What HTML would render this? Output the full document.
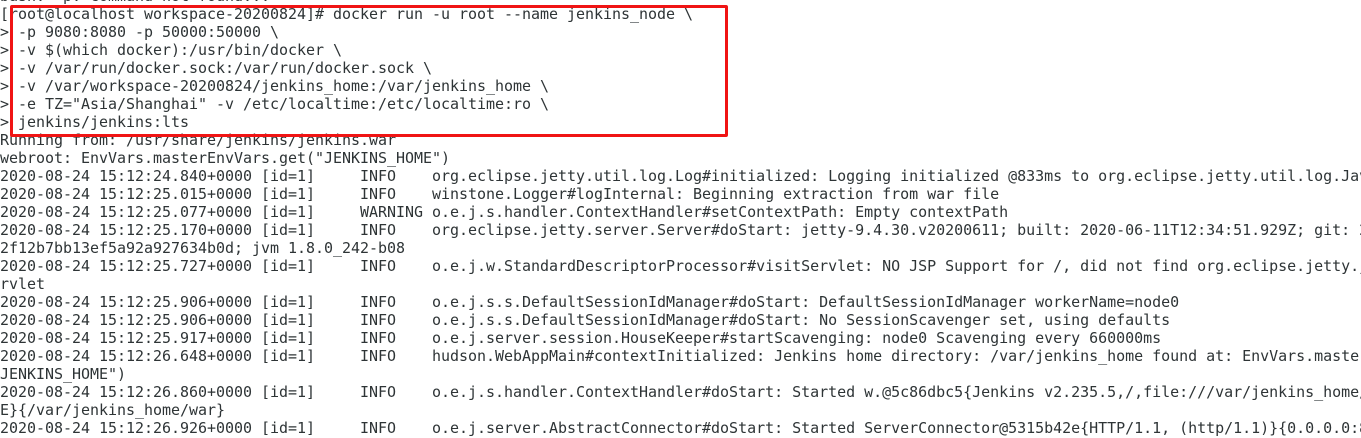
<!DOCTYPE html>
<html><head><meta charset="utf-8"><style>
html,body{margin:0;padding:0;background:#fff;width:1361px;height:438px;overflow:hidden;position:relative}
pre{position:absolute;left:0;top:-13px;width:1361px;height:451px;overflow:hidden;margin:0;font-family:"DejaVu Sans Mono","Liberation Mono",monospace;font-size:15px;line-height:18px;letter-spacing:-0.03px;color:#2e3436;white-space:pre}
.box{position:absolute;left:10px;top:5px;width:712px;height:126px;border:3px solid #f01414;border-radius:2px}
</style></head><body>
<pre>bash: -p: command not found...
[root@localhost workspace-20200824]# docker run -u root --name jenkins_node \
&gt; -p 9080:8080 -p 50000:50000 \
&gt; -v $(which docker):/usr/bin/docker \
&gt; -v /var/run/docker.sock:/var/run/docker.sock \
&gt; -v /var/workspace-20200824/jenkins_home:/var/jenkins_home \
&gt; -e TZ="Asia/Shanghai" -v /etc/localtime:/etc/localtime:ro \
&gt; jenkins/jenkins:lts
Running from: /usr/share/jenkins/jenkins.war
webroot: EnvVars.masterEnvVars.get("JENKINS_HOME")
2020-08-24 15:12:24.840+0000 [id=1]     INFO    org.eclipse.jetty.util.log.Log#initialized: Logging initialized @833ms to org.eclipse.jetty.util.log.JavaUtilLog
2020-08-24 15:12:25.015+0000 [id=1]     INFO    winstone.Logger#logInternal: Beginning extraction from war file
2020-08-24 15:12:25.077+0000 [id=1]     WARNING o.e.j.s.handler.ContextHandler#setContextPath: Empty contextPath
2020-08-24 15:12:25.170+0000 [id=1]     INFO    org.eclipse.jetty.server.Server#doStart: jetty-9.4.30.v20200611; built: 2020-06-11T12:34:51.929Z; git: 2
2f12b7bb13ef5a92a927634b0d; jvm 1.8.0_242-b08
2020-08-24 15:12:25.727+0000 [id=1]     INFO    o.e.j.w.StandardDescriptorProcessor#visitServlet: NO JSP Support for /, did not find org.eclipse.jetty.jsp
rvlet
2020-08-24 15:12:25.906+0000 [id=1]     INFO    o.e.j.s.s.DefaultSessionIdManager#doStart: DefaultSessionIdManager workerName=node0
2020-08-24 15:12:25.906+0000 [id=1]     INFO    o.e.j.s.s.DefaultSessionIdManager#doStart: No SessionScavenger set, using defaults
2020-08-24 15:12:25.917+0000 [id=1]     INFO    o.e.j.server.session.HouseKeeper#startScavenging: node0 Scavenging every 660000ms
2020-08-24 15:12:26.648+0000 [id=1]     INFO    hudson.WebAppMain#contextInitialized: Jenkins home directory: /var/jenkins_home found at: EnvVars.masterEnv
JENKINS_HOME")
2020-08-24 15:12:26.860+0000 [id=1]     INFO    o.e.j.s.handler.ContextHandler#doStart: Started w.@5c86dbc5{Jenkins v2.235.5,/,file:///var/jenkins_home/w
E}{/var/jenkins_home/war}
2020-08-24 15:12:26.926+0000 [id=1]     INFO    o.e.j.server.AbstractConnector#doStart: Started ServerConnector@5315b42e{HTTP/1.1, (http/1.1)}{0.0.0.0:8080}
</pre>
<div class="box"></div>
</body></html>
